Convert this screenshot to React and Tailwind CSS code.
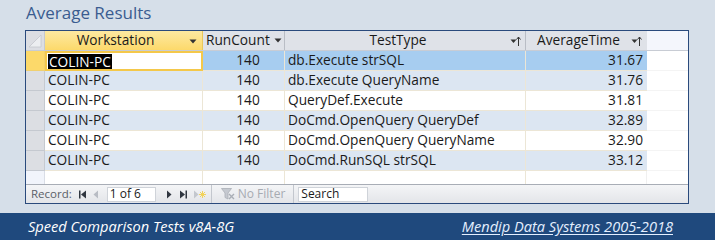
import React from 'react';

const rows = [
  { ws: 'COLIN-PC', rc: 140, tt: 'db.Execute strSQL', at: '31.67' },
  { ws: 'COLIN-PC', rc: 140, tt: 'db.Execute QueryName', at: '31.76' },
  { ws: 'COLIN-PC', rc: 140, tt: 'QueryDef.Execute', at: '31.81' },
  { ws: 'COLIN-PC', rc: 140, tt: 'DoCmd.OpenQuery QueryDef', at: '32.89' },
  { ws: 'COLIN-PC', rc: 140, tt: 'DoCmd.OpenQuery QueryName', at: '32.90' },
  { ws: 'COLIN-PC', rc: 140, tt: 'DoCmd.RunSQL strSQL', at: '33.12' },
];

const font = { fontFamily: '"Open Sans", "Liberation Sans", sans-serif' };

const DropArrow = () => (
  <svg width="8" height="5" viewBox="0 0 8 5">
    <path d="M0.5 0.5h7L4 4.5z" fill="#333" />
  </svg>
);

const SortIcon = () => (
  <svg width="11" height="10" viewBox="0 0 11 10">
    <path d="M0.5 3.5h6L3.5 7z" fill="#333" />
    <path d="M8.5 1v9" stroke="#333" strokeWidth="1" />
    <path d="M6.5 3.5L8.5 1l2 2.5" stroke="#333" strokeWidth="1" fill="none" />
  </svg>
);

const NavIcon = ({ kind, dim }) => {
  const c = dim ? '#b8bcc4' : '#2f3640';
  if (kind === 'first')
    return (
      <svg width="10" height="9" viewBox="0 0 10 9">
        <rect x="1" y="0.5" width="1.5" height="8" fill={c} />
        <path d="M8 0.5v8L3 4.5z" fill={c} />
      </svg>
    );
  if (kind === 'prev')
    return (
      <svg width="8" height="9" viewBox="0 0 8 9">
        <path d="M6 0.5v8L1.5 4.5z" fill={c} />
      </svg>
    );
  if (kind === 'next')
    return (
      <svg width="8" height="9" viewBox="0 0 8 9">
        <path d="M2 0.5v8L6.5 4.5z" fill={c} />
      </svg>
    );
  if (kind === 'last')
    return (
      <svg width="10" height="9" viewBox="0 0 10 9">
        <path d="M2 0.5v8L7 4.5z" fill={c} />
        <rect x="7.5" y="0.5" width="1.5" height="8" fill={c} />
      </svg>
    );
  return (
    <svg width="13" height="9" viewBox="0 0 13 9">
      <path d="M1 0.5v8L5.5 4.5z" fill="#c3c7ce" />
      <path d="M9.5 1v7M6 4.5h7M7 2l5 5M12 2l-5 5" stroke="#f2d35a" strokeWidth="1" />
    </svg>
  );
};

const FilterIcon = () => (
  <svg width="14" height="12" viewBox="0 0 14 12">
    <path d="M0.5 0.5h10L7 5v6L4 9.5V5z" fill="#c5c9d0" stroke="#a9aeb6" strokeWidth="0.8" />
    <path d="M8 6l5 5M13 6l-5 5" stroke="#a9aeb6" strokeWidth="1.4" />
  </svg>
);

export default function App() {
  return (
    <div className="w-[715px] h-[240px] bg-[#d6dfe9] flex flex-col overflow-hidden" style={font}>
      <div className="h-[30px] pl-[26px] pt-[1px] text-[17px] leading-[24px] text-[#3a5c90]">Average Results</div>

      <div className="ml-[25px] w-[664px] h-[174px] border border-[#2a4a7c] bg-white flex flex-col text-[13.7px] text-[#1a1a1a]">
        {/* header */}
        <div className="flex h-[20px] border-b border-[#c8ccd4] bg-[#dfe2e8]">
          <div className="w-[19px] shrink-0 border-r border-[#c5c9d0] bg-[#dcdee3] relative">
            <svg className="absolute left-[2px] top-[3px]" width="14" height="14" viewBox="0 0 14 14">
              <path d="M13 1V13H1z" fill="#eceef1" stroke="#c4c7cd" strokeWidth="0.8" />
            </svg>
          </div>
          <div className="w-[158px] shrink-0 border-r border-[#e9c85a] bg-gradient-to-b from-[#fde9a0] to-[#fcd96a] flex items-center relative pr-[16px]">
            <span className="flex-1 text-center">Workstation</span>
            <span className="absolute right-[5px] top-[8px] flex"><DropArrow /></span>
          </div>
          <div className="w-[82px] shrink-0 border-r border-[#b9bdc5] flex items-center pl-[3px] gap-[4px]">
            <span>RunCount</span>
            <DropArrow />
          </div>
          <div className="w-[241px] shrink-0 border-r border-[#b9bdc5] flex items-center relative pr-[14px]">
            <span className="flex-1 text-center">TestType</span>
            <span className="absolute right-[4px] top-[5px] flex"><SortIcon /></span>
          </div>
          <div className="w-[121px] shrink-0 flex items-center pl-[11px] gap-[11px]">
            <span>AverageTime</span>
            <SortIcon />
          </div>
          <div className="flex-1 bg-[#f4f6fc]" />
        </div>

        {rows.map((r, i) => {
          const sel = i === 0;
          const bg = sel ? 'bg-[#a7cdf0]' : i % 2 === 1 ? 'bg-[#dce6f2]' : 'bg-white';
          return (
            <div key={i} className="flex h-[20px]">
              <div className={`w-[19px] shrink-0 border-r border-b ${sel ? 'bg-[#fcd96a] border-[#f0d070]' : 'bg-[#dcdee3] border-[#c5c9d0]'}`} />
              <div className={`w-[158px] shrink-0 flex items-center ${sel ? 'bg-white border-2 border-[#f4c84a] pl-[1px]' : `${bg} border-r border-b border-[#ece6d6] pl-[3px]`}`}>
                {sel ? <span className="bg-black text-white leading-[15px] px-[1px]">{r.ws}</span> : r.ws}
              </div>
              <div className={`w-[82px] shrink-0 border-r border-b border-[#ece6d6] ${bg} flex items-center justify-center pl-[9px]`}>{r.rc}</div>
              <div className={`w-[241px] shrink-0 border-r border-b border-[#ece6d6] ${bg} flex items-center pl-[3px]`}>{r.tt}</div>
              <div className={`w-[121px] shrink-0 border-b border-[#ece6d6] ${bg} flex items-center justify-end pr-[4px]`}>{r.at}</div>
              <div className="flex-1 border-b border-[#f4f4f4] bg-white" />
            </div>
          );
        })}

        {/* new record row */}
        <div className="flex h-[13px]">
          <div className="w-[19px] shrink-0 border-r border-[#d9dde6] bg-[#f1f4fb]" />
          <div className="w-[158px] shrink-0 border-r border-[#ece6d6]" />
          <div className="w-[82px] shrink-0 border-r border-[#ece6d6]" />
          <div className="w-[241px] shrink-0 border-r border-[#ece6d6]" />
          <div className="w-[121px] shrink-0 border-r border-[#f0f0f0]" />
          <div className="flex-1" />
        </div>

        {/* nav bar */}
        <div className="flex-1 flex items-center border-t border-[#a8adb6] bg-gradient-to-b from-[#f4f5f7] to-[#e3e5e9] text-[11.5px] text-[#5a6068]">
          <span className="pl-[5px] pr-[6px]">Record:</span>
          <span className="flex items-center gap-[4px]">
            <NavIcon kind="first" />
            <NavIcon kind="prev" dim />
          </span>
          <div className="ml-[7px] w-[49px] h-[15px] bg-white border border-[#cfd3d9] text-[#1a1a1a] text-[12px] flex items-center pl-[2px]">1 of 6</div>
          <span className="flex items-center gap-[5px] ml-[9px]">
            <NavIcon kind="next" />
            <NavIcon kind="last" />
            <NavIcon kind="new" />
          </span>
          <div className="ml-[5px] h-full border-l border-[#c3c7ce] flex items-center pl-[9px] pr-[8px] gap-[3px] text-[12px] text-[#a7abb2]">
            <FilterIcon />
            <span>No Filter</span>
          </div>
          <div className="h-full border-l border-[#c3c7ce] flex items-center pl-[4px]">
            <div className="w-[70px] h-[15px] bg-white border border-[#cfd3d9] text-[#1a1a1a] text-[12px] flex items-center pl-[2px]">Search</div>
          </div>
        </div>
      </div>

      <div className="mt-[9px] flex-1 bg-[#1f497d] flex items-center justify-between pl-[28px] pr-[42px] italic text-[14.6px]">
        <span className="text-white">Speed Comparison Tests v8A-8G</span>
        <span className="text-[#e4efff] underline underline-offset-2">Mendip Data Systems 2005-2018</span>
      </div>
    </div>
  );
}
